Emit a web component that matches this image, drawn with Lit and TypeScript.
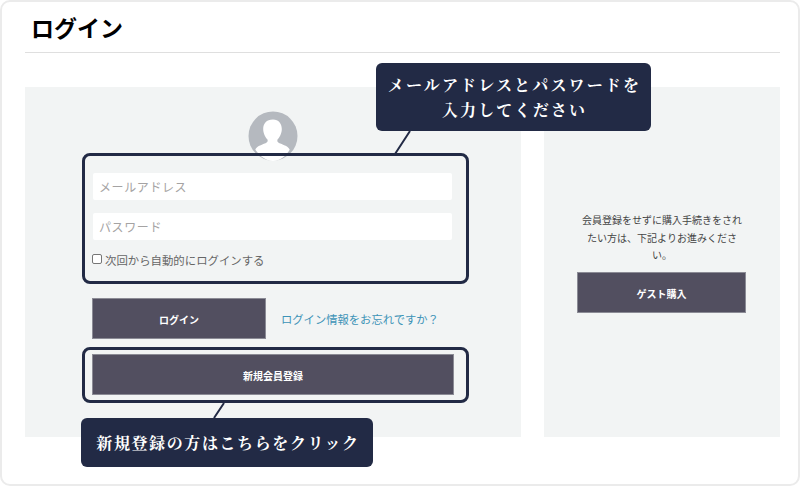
import { LitElement, html, css } from "lit";
import { customElement } from "lit/decorators.js";

@customElement("app-root")
export class AppRoot extends LitElement {
  static styles = css`
    :host { display: block; width: 800px; height: 486px; background: #fff; position: relative; overflow: hidden;
      font-family: "Noto Sans CJK JP", "Noto Sans", sans-serif; color: #555; }
    * { box-sizing: border-box; }
    .card { width: 800px; height: 486px; border: 2px solid #ebebeb; border-radius: 10px; padding: 0 18px 0 23px; }
    .head { height: 51px; border-bottom: 1px solid #dfdfdf; padding: 8px 0 0 6px; font-size: 23px; line-height: 34px; font-weight: 700; color: #000; }
    .panels { display: flex; gap: 23px; margin-top: 34px; height: 350px; }
    .left { width: 496px; background: #f2f4f4; padding: 24px 67px 0; }
    .right { width: 236px; background: #f2f4f4; padding: 124px 33px 0; }
    .avatar { display: block; margin: 0 0 12px 156px; }
    .input { height: 27px; width: 359px; margin-left: 1px; background: #fff; border-radius: 2px; padding-left: 6px; font-size: 12px; line-height: 27px; letter-spacing: .6px; color: #a5a3a3; margin-bottom: 13px; }
    .remember { display: flex; align-items: center; height: 16px; margin-top: -1px; font-size: 11.4px; color: #666; gap: 3px; white-space: nowrap; }
    .box { width: 10px; height: 10px; border: 1px solid #767676; border-radius: 2px; background: #fff; margin-top: -3px; flex: none; }
    .row { display: flex; align-items: center; gap: 15px; margin-top: 30px; }
    .btn { display: flex; align-items: center; justify-content: center; background: #524f60; border: 1px solid #8b8b95; color: #fff; font-size: 10px; font-weight: 700; height: 41px; flex: none; padding-top: 1px; }
    .login { width: 174px; }
    .link { font-size: 11.3px; color: #3d93b7; white-space: nowrap; }
    .signup { width: 362px; margin-top: 15px; }
    .guest { width: 169px; }
    .note { font-size: 10px; line-height: 17.5px; color: #444; text-align: center; margin: 0 2px 8.5px; }
    .mark { position: absolute; left: 82px; width: 387px; border: 3px solid #222a45; border-radius: 8px; }
    .m1 { top: 153px; height: 131px; }
    .m2 { top: 347px; height: 56px; }
    .call { position: absolute; background: #222a45; border-radius: 6px; color: #fff; text-align: center; font-family: "Noto Serif CJK JP", "Source Han Serif", "Liberation Serif", "Noto Sans CJK JP", serif; font-weight: 700; font-size: 16px; letter-spacing: 2.15px; line-height: 25px; display: flex; align-items: center; justify-content: center; padding-left: 2px; }
    .c1 { left: 376px; top: 63px; width: 275px; height: 68px; }
    .c2 { left: 81px; top: 418px; width: 292px; height: 49px; letter-spacing: 1.6px; }
    .wire { position: absolute; left: 0; top: 0; }
  `;

  render() {
    return html`
      <div class="card">
        <div class="head">ログイン</div>
        <div class="panels">
          <div class="left">
            <svg class="avatar" width="50" height="50" viewBox="0 0 50 50">
              <circle cx="25" cy="25" r="24.5" fill="#b5b9bf"></circle>
              <path d="M25 8.500c5.700 0 8.800 4.200 8.800 9.500 0 4.700-2.300 8.500-4.300 10.500-.6 1.800.2 3 2 3.800 4.200 1.700 8.800 3 10.200 6.500C37.500 46 31.500 50 25 50S12.500 46 7.300 38.800c1.400-3.500 6-4.800 10.200-6.500 1.800-.8 2.600-2 2-3.800-2-2-4.300-5.800-4.300-10.500 0-5.300 3.100-9.500 9.800-9.500z" fill="#fff"></path>
            </svg>
            <div class="input">メールアドレス</div>
            <div class="input">パスワード</div>
            <div class="remember"><span class="box"></span>次回から自動的にログインする</div>
            <div class="row">
              <div class="btn login">ログイン</div>
              <span class="link">ログイン情報をお忘れですか？</span>
            </div>
            <div class="btn signup">新規会員登録</div>
          </div>
          <div class="right">
            <div class="note">会員登録をせずに購入手続きをされたい方は、下記よりお進みください。</div>
            <div class="btn guest">ゲスト購入</div>
          </div>
        </div>
      </div>
      <svg class="wire" width="800" height="486" viewBox="0 0 800 486">
        <path d="M410 131 395 154M224 403 214 418" stroke="#222a45" stroke-width="2" fill="none"></path>
      </svg>
      <div class="mark m1"></div>
      <div class="mark m2"></div>
      <div class="call c1"><span>メールアドレスとパスワードを<br />入力してください</span></div>
      <div class="call c2"><span>新規登録の方はこちらをクリック</span></div>
    `;
  }
}
